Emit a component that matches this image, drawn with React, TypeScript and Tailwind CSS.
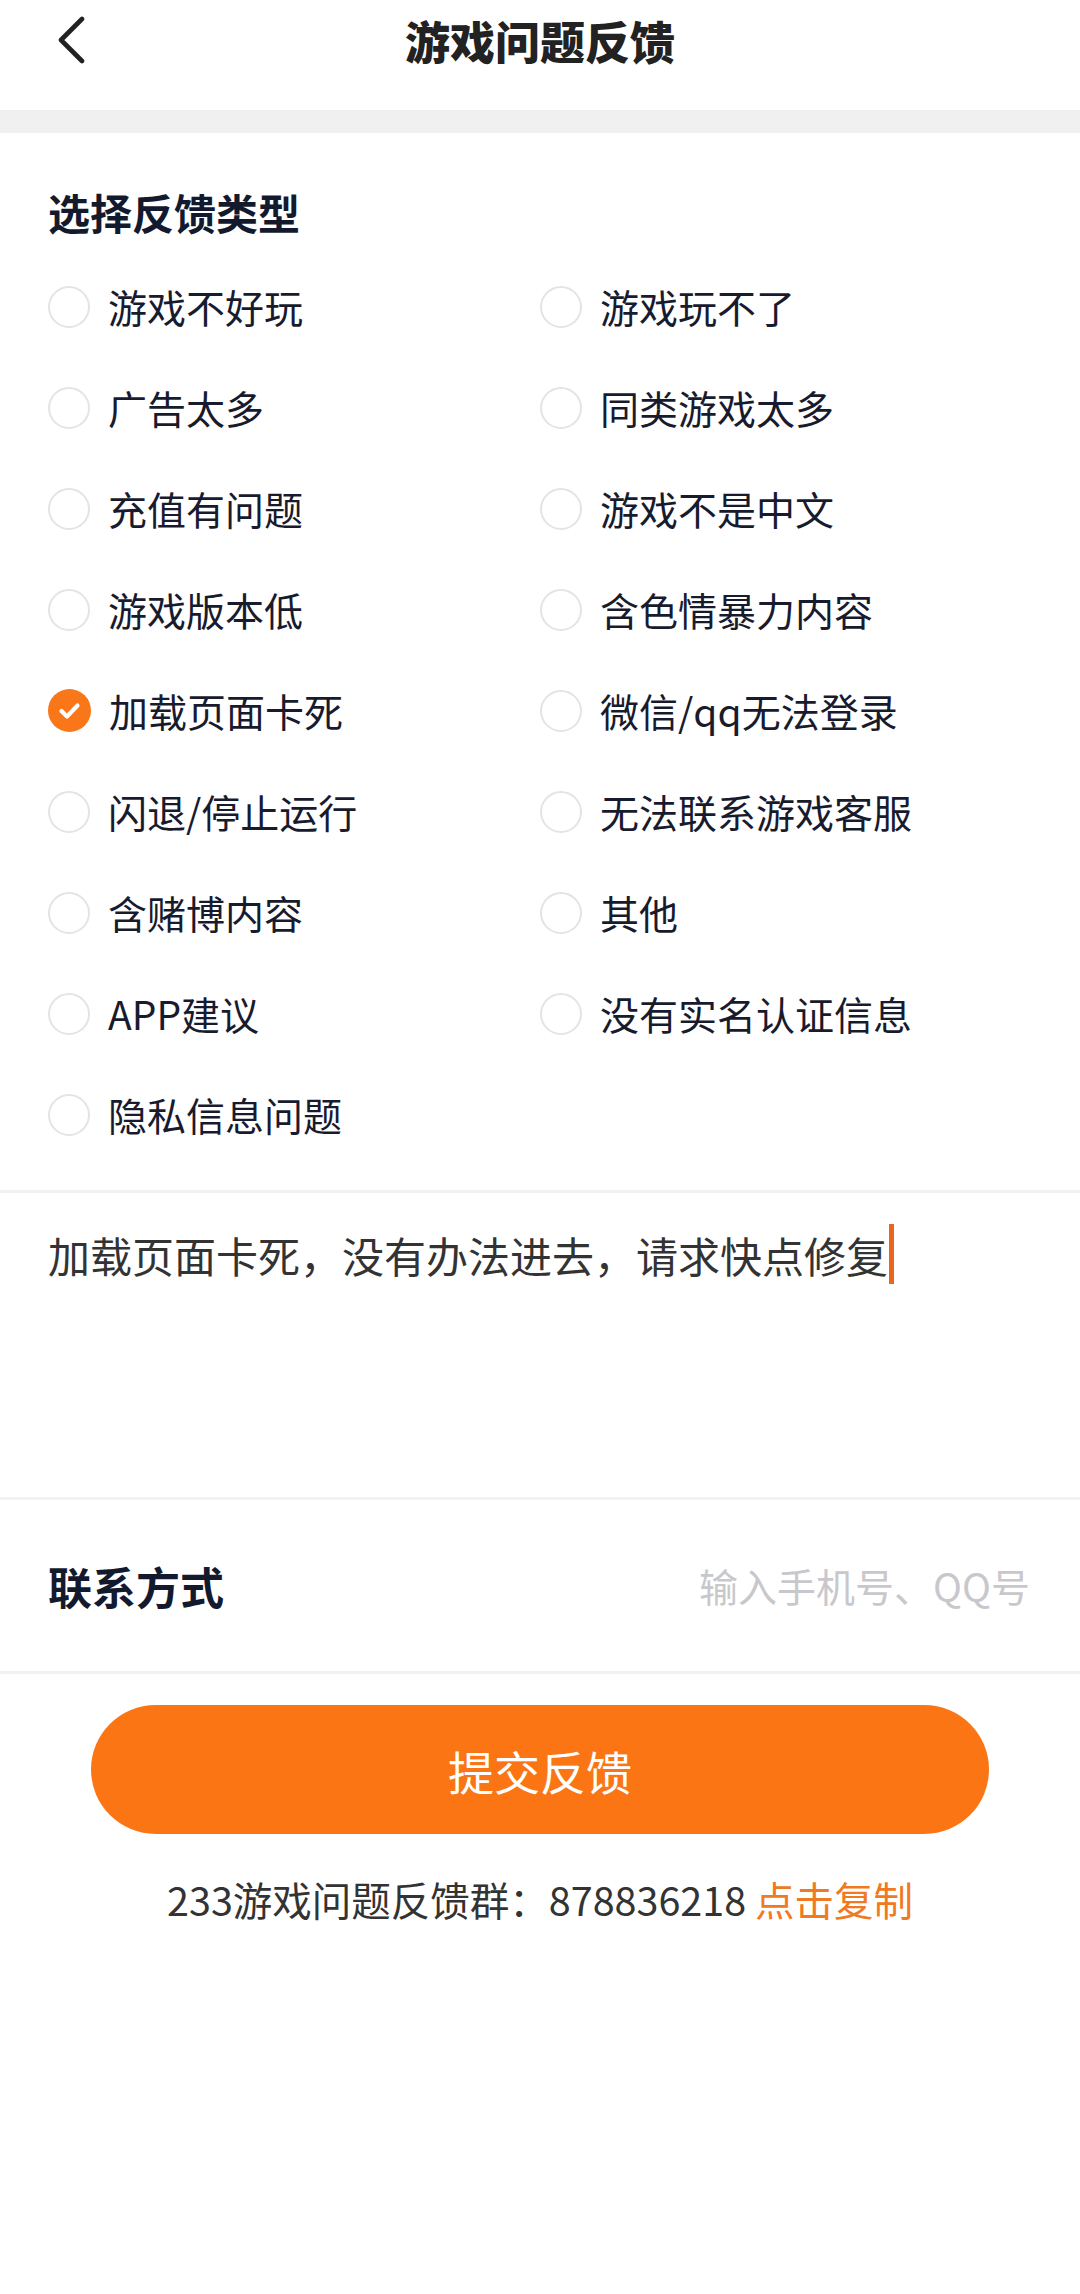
import React from "react";

const font = { fontFamily: '"Noto Sans CJK SC", "Noto Sans", sans-serif' };

const rows: [string, string | null][] = [
  ["游戏不好玩", "游戏玩不了"],
  ["广告太多", "同类游戏太多"],
  ["充值有问题", "游戏不是中文"],
  ["游戏版本低", "含色情暴力内容"],
  ["加载页面卡死", "微信/qq无法登录"],
  ["闪退/停止运行", "无法联系游戏客服"],
  ["含赌博内容", "其他"],
  ["APP建议", "没有实名认证信息"],
  ["隐私信息问题", null],
];

function Radio({ checked }: { checked?: boolean }) {
  if (checked) {
    return (
      <span className="flex h-[43px] w-[43px] shrink-0 items-center justify-center rounded-full bg-[#f97718]">
        <svg width="43" height="43" viewBox="0 0 43 43">
          <path d="M13.5 22 L19 27.5 L29.5 16.5" fill="none" stroke="#fff" strokeWidth="4.2" strokeLinecap="round" strokeLinejoin="round" />
        </svg>
      </span>
    );
  }
  return <span className="block h-[42px] w-[42px] shrink-0 rounded-full border-[2.5px] border-[#e4e4e6]" />;
}

function Option({ label, checked }: { label: string; checked?: boolean }) {
  return (
    <div className="flex h-[101px] items-center gap-[18px]">
      <Radio checked={checked} />
      <span className="text-[39px] leading-none text-[#181b2e]">{label}</span>
    </div>
  );
}

export default function App() {
  return (
    <div className="min-h-[2294px] w-[1080px] bg-white" style={font}>
      {/* Header */}
      <div className="h-[110px]">
        <div className="grid h-[80px] grid-cols-[1fr_auto_1fr] items-center">
          <div className="pl-[56px]">
            <svg width="30" height="48" viewBox="0 0 30 48">
              <path d="M26 3 L5 24 L26 45" fill="none" stroke="#222" strokeWidth="4.6" strokeLinecap="round" strokeLinejoin="round" />
            </svg>
          </div>
          <div className="text-[45px] font-black leading-none text-[#222]">游戏问题反馈</div>
          <div />
        </div>
      </div>
      <div className="h-[23px] bg-[#f0f0f0]" />

      {/* Feedback type */}
      <div className="px-[48px] pt-[49px] pb-[25px]">
        <div className="mb-[15px] text-[42px] font-bold leading-[59px] text-[#141a2e]">选择反馈类型</div>
        <div className="grid grid-cols-2">
          {rows.map(([l, r], i) => (
            <React.Fragment key={i}>
              <Option label={l} checked={l === "加载页面卡死"} />
              {r ? <Option label={r} /> : <div />}
            </React.Fragment>
          ))}
        </div>
      </div>
      <div className="h-[3px] bg-[#f2f2f3]" />

      {/* Text area */}
      <div className="h-[304px] px-[48px] pt-[31px]">
        <div className="flex items-center text-[42px] leading-[59px] text-[#333]">
          <span>加载页面卡死，没有办法进去，请求快点修复</span>
          <span className="ml-[1px] inline-block h-[60px] w-[5px] bg-[#e9661e]" />
        </div>
      </div>
      <div className="h-[3px] bg-[#f2f2f3]" />

      {/* Contact */}
      <div className="flex h-[171px] items-center justify-between pl-[48px] pr-[50px]">
        <span className="text-[44px] font-bold leading-none text-[#141a2e]">联系方式</span>
        <span className="text-[39px] leading-none text-[#c8c8cc]">输入手机号、QQ号</span>
      </div>
      <div className="h-[3px] bg-[#f2f2f3]" />

      {/* Submit */}
      <div className="px-[91px] pt-[31px]">
        <button className="flex h-[129px] w-full items-center justify-center rounded-full bg-[#fb7515] text-[46px] leading-none text-white">
          提交反馈
        </button>
      </div>

      <div className="mt-[37px] text-center text-[39.5px] leading-[55px] text-[#333]">
        233游戏问题反馈群：878836218 <span className="text-[#f07a22]">点击复制</span>
      </div>
    </div>
  );
}
